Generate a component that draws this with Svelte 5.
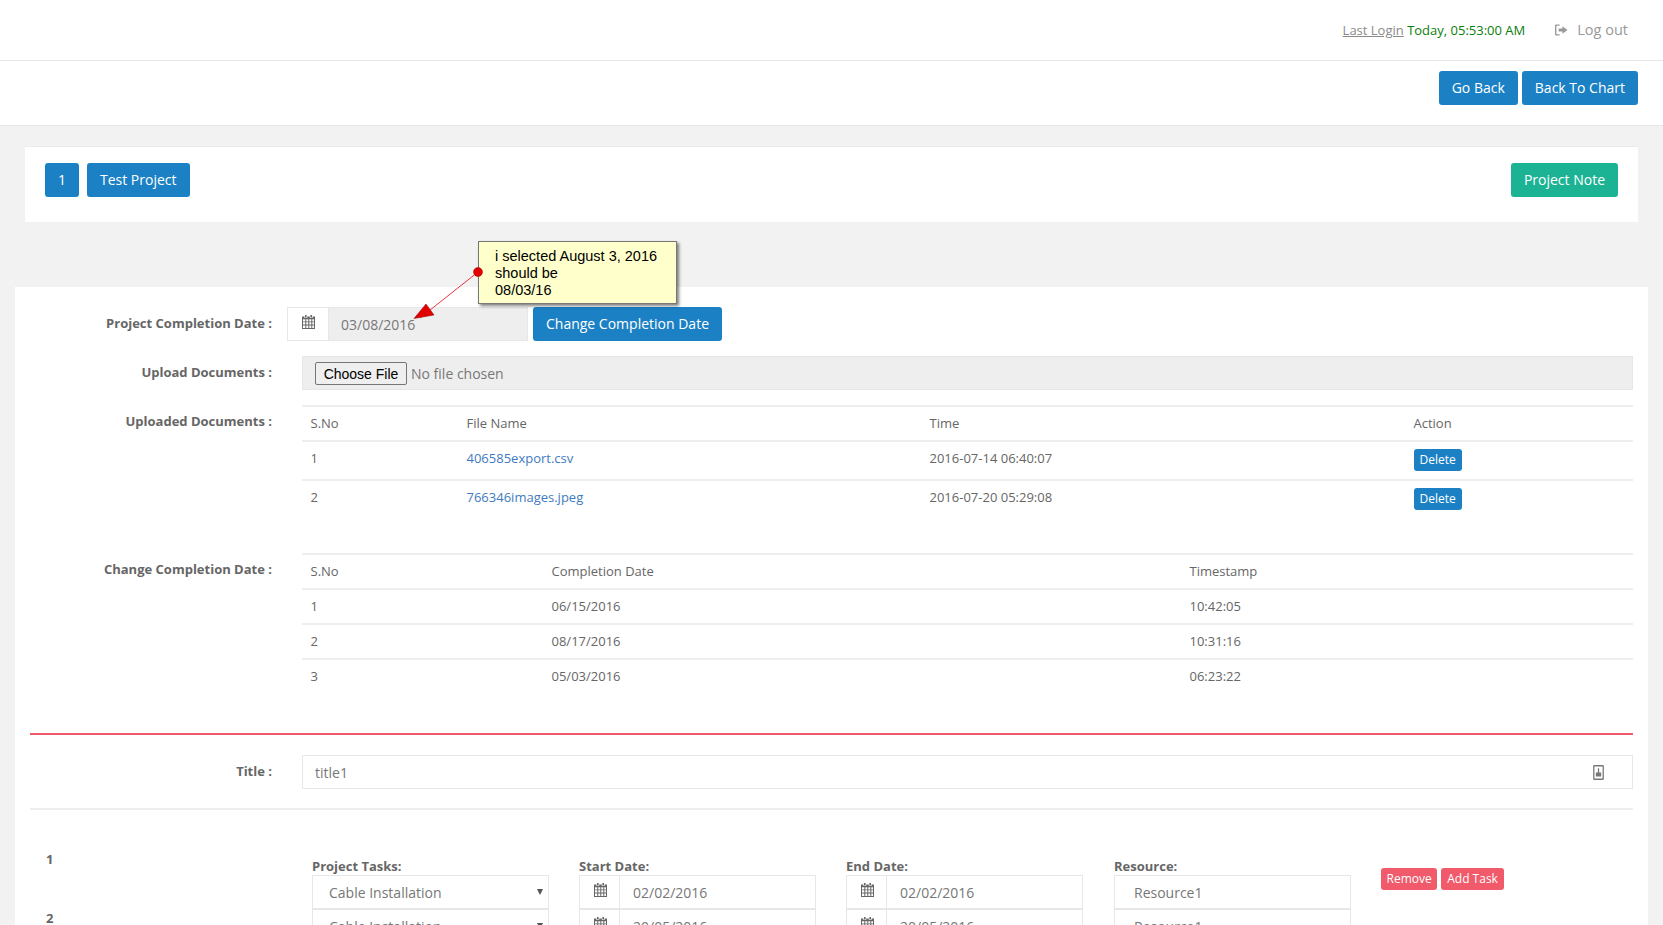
<script>
  const docs = [
    { n: 1, name: '406585export.csv', time: '2016-07-14 06:40:07' },
    { n: 2, name: '766346images.jpeg', time: '2016-07-20 05:29:08' }
  ];
  const changes = [
    { n: 1, date: '06/15/2016', ts: '10:42:05' },
    { n: 2, date: '08/17/2016', ts: '10:31:16' },
    { n: 3, date: '05/03/2016', ts: '06:23:22' }
  ];
  const tasks = [
    { start: '02/02/2016', end: '02/02/2016', res: 'Resource1' },
    { start: '20/05/2016', end: '20/05/2016', res: 'Resource1' }
  ];
</script>

{#snippet cal()}
  <svg class="cal" viewBox="0 0 13 14" width="13" height="14" aria-hidden="true">
    <path fill="#666" fill-rule="evenodd" d="M3 0h1.600v2.400H3zM8.400 0H10v2.400H8.400zM0 1.500h2.400v1.500h2.800V1.500h2.600v1.500h2.800V1.500H13V14H0zM1 4.200v2.200h2.300V4.200zm3.300 0v2.200h2V4.200zm3 0v2.200h2V4.200zm3 0v2.200H12V4.200zM1 7.300v2.200h2.300V7.300zm3.300 0v2.200h2V7.300zm3 0v2.200h2V7.300zm3 0v2.200H12V7.300zM1 10.400V13h2.300v-2.600zm3.300 0V13h2v-2.600zm3 0V13h2v-2.600zm3 0V13H12v-2.600z"/>
  </svg>
{/snippet}

<div class="page">
  <header class="top">
    <span class="login"><u>Last Login</u> <span class="today">Today, 05:53:00 AM</span></span>
    <span class="logout">
      <svg viewBox="0 0 14 12" width="13" height="12" aria-hidden="true">
        <path fill="#999" fill-rule="evenodd" d="M1.500 0H5v1.500H2a.5.5 0 0 0-.5.5v8a.5.5 0 0 0 .5.500h3V12H1.500A1.500 1.500 0 0 1 0 10.500v-9A1.500 1.500 0 0 1 1.500 0zM8 2l5.500 4L8 10V7.700H4V4.300h4z"/>
      </svg>
      Log out
    </span>
  </header>

  <div class="subbar">
    <button class="btn">Go Back</button>
    <button class="btn">Back To Chart</button>
  </div>

  <main>
    <section class="project">
      <div class="left">
        <button class="btn one">1</button>
        <button class="btn">Test Project</button>
      </div>
      <button class="btn green">Project Note</button>
    </section>

    <section class="form">
      <div class="note">i selected August 3, 2016<br />should be<br />08/03/16</div>
      <svg class="arrow" viewBox="0 0 80 60" width="80" height="60" aria-hidden="true">
        <line x1="68" y1="12" x2="10" y2="58" stroke="#e8353a" stroke-width="1" />
        <polygon points="4,58.500 16,44 24,55" fill="#e00000" stroke="#8a0000" stroke-width=".5" />
        <circle cx="68" cy="12" r="4.500" fill="#e00000" stroke="#a00000" stroke-width=".5" />
      </svg>

      <div class="row date-row">
        <div class="label">Project Completion Date :</div>
        <div class="date-group">
          <span class="addon">{@render cal()}</span>
          <input class="date-input" readonly value="03/08/2016" />
        </div>
        <button class="btn change">Change Completion Date</button>
      </div>

      <div class="row upload-row">
        <div class="label">Upload Documents :</div>
        <div class="upload"><input type="file" /></div>
      </div>

      <div class="row docs-row">
        <div class="label tbl-label">Uploaded Documents :</div>
        <table class="docs">
          <colgroup><col class="d1" /><col class="d2" /><col class="d3" /><col /></colgroup>
          <thead><tr><th>S.No</th><th>File Name</th><th>Time</th><th>Action</th></tr></thead>
          <tbody>
            {#each docs as d}
              <tr>
                <td>{d.n}</td>
                <td><a href="#top">{d.name}</a></td>
                <td>{d.time}</td>
                <td><button class="btn del">Delete</button></td>
              </tr>
            {/each}
          </tbody>
        </table>
      </div>

      <div class="row changes-row">
        <div class="label tbl-label">Change Completion Date :</div>
        <table class="changes">
          <colgroup><col class="c1" /><col class="c2" /><col /></colgroup>
          <thead><tr><th>S.No</th><th>Completion Date</th><th>Timestamp</th></tr></thead>
          <tbody>
            {#each changes as c}
              <tr><td>{c.n}</td><td>{c.date}</td><td>{c.ts}</td></tr>
            {/each}
          </tbody>
        </table>
      </div>

      <div class="red"></div>

      <div class="row title-row">
        <div class="label">Title :</div>
        <div class="title-box">
          <input class="title-input" readonly value="title1" />
          <svg class="doc" viewBox="0 0 10 14" width="11" height="15" aria-hidden="true">
            <path fill="#777" fill-rule="evenodd" d="M1 0h8a1 1 0 0 1 1 1v12a1 1 0 0 1-1 1H1a1 1 0 0 1-1-1V1a1 1 0 0 1 1-1zm.2 1.500v11h7.600v-11zM4.400 3h1.200v4H7.500v3.800h-5V7h1.900z"/>
          </svg>
        </div>
      </div>

      <div class="hr"></div>

      <div class="tasks">
        <div class="nums"><div>1</div><div>2</div></div>
        <div class="grid">
          <div class="cell-label">Project Tasks:</div>
          <div class="cell-label">Start Date:</div>
          <div class="cell-label">End Date:</div>
          <div class="cell-label shift">Resource:</div>
          <div class="actions">
            <button class="btn red-btn">Remove</button>
            <button class="btn red-btn">Add Task</button>
          </div>
          {#each tasks as t}
            <div class="selwrap"><select class="ctl select"><option>Cable Installation</option></select></div>
            <div class="ctl dated"><span class="addon small">{@render cal()}</span><span class="val">{t.start}</span></div>
            <div class="ctl dated"><span class="addon small">{@render cal()}</span><span class="val">{t.end}</span></div>
            <div class="ctl res shift">{t.res}</div>
            <div></div>
          {/each}
        </div>
      </div>
    </section>
  </main>
</div>

<style>
  :global(body) {
    margin: 0;
    background: #f2f2f2;
  }
  .page {
    height: 925px;
    overflow: hidden;
    font: 14px/20px "Open Sans", sans-serif;
    color: #666;
  }
  .top {
    height: 61px;
    box-sizing: border-box;
    background: #fff;
    border-bottom: 1px solid #e7e7e7;
    display: flex;
    justify-content: flex-end;
    align-items: center;
    gap: 30px;
    padding: 0 35px 0 0;
    font-size: 13px;
    color: #8a8a8a;
  }
  .today { color: #0a7d0a; }
  .logout {
    font-size: 14.5px;
    color: #999;
    display: flex;
    align-items: center;
    gap: 9px;
  }
  .subbar {
    height: 65px;
    box-sizing: border-box;
    background: #fff;
    border-bottom: 1px solid #e7e7e7;
    display: flex;
    justify-content: flex-end;
    align-items: flex-start;
    gap: 4px;
    padding: 10px 25px 0 0;
  }
  .btn {
    height: 34px;
    padding: 0 13px 2px;
    border: 0;
    border-radius: 3px;
    background: #1c81c4;
    color: #fff;
    font: 14px "Open Sans", sans-serif;
    cursor: pointer;
  }
  main { padding-top: 20px; }
  .project {
    margin: 0 25px;
    height: 76px;
    box-sizing: border-box;
    background: #fff;
    border-top: 1px solid #e7ecf1;
    padding: 16px 20px 0;
    display: flex;
    justify-content: space-between;
    align-items: flex-start;
  }
  .left { display: flex; gap: 8px; }
  .one { width: 34px; padding: 0 0 2px; }
  .green { background: #1bb394; }
  .form {
    position: relative;
    margin: 65px 15px 0;
    background: #fff;
    padding: 20px 15px 60px 15px;
    height: 600px;
  }
  .note {
    position: absolute;
    left: 463px;
    top: -46px;
    padding: 6px 0 0 16px;
    box-sizing: content-box;
    width: 181px;
    height: 55px;
    background: #ffffcc;
    border: 1px solid #777;
    box-shadow: 2px 2px 3px rgba(0, 0, 0, 0.5);
    font: 14.5px/17px "Liberation Sans", Arial, sans-serif;
    color: #000;
    z-index: 2;
  }
  .arrow {
    position: absolute;
    left: 395px;
    top: -27px;
    z-index: 3;
  }
  .row { display: flex; }
  .label {
    width: 242px;
    flex: none;
    text-align: right;
    font-weight: 700;
    font-size: 13px;
    color: #666;
    line-height: 33px;
  }
  .date-row { height: 34px; }
  .date-group {
    margin-left: 15px;
    width: 241px;
    height: 34px;
    box-sizing: border-box;
    display: flex;
    border: 1px solid #e7e7e7;
  }
  .addon {
    width: 41px;
    flex: none;
    display: flex;
    justify-content: center;
    padding-top: 7px;
    box-sizing: border-box;
    background: #fff;
    border-right: 1px solid #e7e7e7;
  }
  .date-input {
    flex: 1;
    min-width: 0;
    border: 0;
    outline: 0;
    background: #eee;
    padding: 0 12px;
    font: 14px "Open Sans", sans-serif;
    color: #777;
  }
  .change { margin-left: 5px; }
  .upload-row { margin-top: 15px; height: 34px; }
  .upload {
    margin-left: 30px;
    width: 1331px;
    height: 34px;
    box-sizing: border-box;
    background: #eee;
    border: 1px solid #e7e7e7;
    padding: 0 0 0 12px;
    display: flex;
    align-items: center;
  }
  .upload input {
    font: 14px "Open Sans", sans-serif;
    color: #777;
  }
  .upload input::file-selector-button {
    font: 14px "Liberation Sans", Arial, sans-serif;
    color: #000;
    height: 23px;
    width: 92px;
    padding: 1px 0 0;
    margin-right: 4px;
    border: 1px solid #767676;
    border-radius: 2px;
    background: #efefef;
  }
  .docs-row { margin-top: 15px; height: 148px; }
  .changes-row { height: 180px; }
  .tbl-label { line-height: 20px; padding-top: 6px; box-sizing: border-box; }
  table {
    margin-left: 30px;
    width: 1331px;
    table-layout: fixed;
    border-collapse: collapse;
    align-self: flex-start;
    font-size: 13px;
    color: #666;
  }
  th, td {
    padding: 0 8px 2px 8.500px;
    text-align: left;
    font-weight: 400;
    border-top: 2px solid #eee;
    height: 35px;
    box-sizing: border-box;
  }
  .docs td { height: 39px; padding-bottom: 6px; }
  .d1 { width: 156px; }
  .d2 { width: 463px; }
  .d3 { width: 484px; }
  .c1 { width: 241px; }
  .c2 { width: 638px; }
  a { color: #3f7bc0; text-decoration: none; }
  .del {
    height: 22px;
    font-size: 12px;
    padding: 0 6px 1px;
    margin-top: 4px;
    vertical-align: middle;
  }
  .red {
    height: 2px;
    background: #f05a6a;
  }
  .title-row { margin-top: 20px; height: 34px; }
  .title-box {
    margin-left: 30px;
    width: 1331px;
    height: 34px;
    box-sizing: border-box;
    border: 1px solid #e7e7e7;
    display: flex;
    align-items: center;
    padding: 0 28px 0 12px;
  }
  .title-input {
    flex: 1;
    border: 0;
    outline: 0;
    padding: 0;
    font: 14px "Open Sans", sans-serif;
    color: #777;
  }
  .hr {
    height: 2px;
    background: #eee;
    margin-top: 19px;
  }
  .tasks {
    display: flex;
    margin-top: 41px;
  }
  .nums {
    width: 282px;
    flex: none;
    padding-left: 16px;
    margin-top: -2px;
    box-sizing: border-box;
    font-weight: 700;
    font-size: 13px;
  }
  .nums div { height: 59px; line-height: 20px; }
  .grid {
    display: grid;
    grid-template-columns: 237px 237px 237px 237px 1fr;
    column-gap: 30px;
    grid-template-rows: 18px;
    grid-auto-rows: 34px;
    margin-top: 6px;
    align-items: start;
  }
  .cell-label {
    font-weight: 700;
    font-size: 13px;
    line-height: 18px;
  }
  .shift {
    margin-left: 1px;
    width: 237px;
  }
  .actions {
    display: flex;
    gap: 4px;
    margin-top: 11px;
    margin-left: 1px;
    height: 22px;
  }
  .red-btn {
    height: 22px;
    background: #f05a6a;
    padding: 0 5.500px 1px;
    font-size: 12px;
  }
  .red-btn + .red-btn { padding: 0 6px 1px; }
  .ctl {
    height: 34px;
    box-sizing: border-box;
    border: 1px solid #e7e7e7;
    background: #fff;
    color: #777;
    font: 14px "Open Sans", sans-serif;
    border-radius: 0;
  }
  .selwrap { position: relative; }
  .selwrap::after {
    content: "";
    position: absolute;
    right: 6px;
    top: 14px;
    border-left: 3px solid transparent;
    border-right: 3px solid transparent;
    border-top: 6px solid #555;
  }
  .select {
    display: block;
    width: 100%;
    padding-left: 16px;
    outline: 0;
    appearance: none;
  }
  .dated { display: flex; align-items: stretch; }
  .addon.small { background: none; width: 40px; padding: 7px 0 0 1px; }
  .val { padding: 7px 0 0 13px; line-height: 20px; }
  .res { padding: 7px 0 0 19px; line-height: 20px; }
  .cal { display: block; }
</style>
